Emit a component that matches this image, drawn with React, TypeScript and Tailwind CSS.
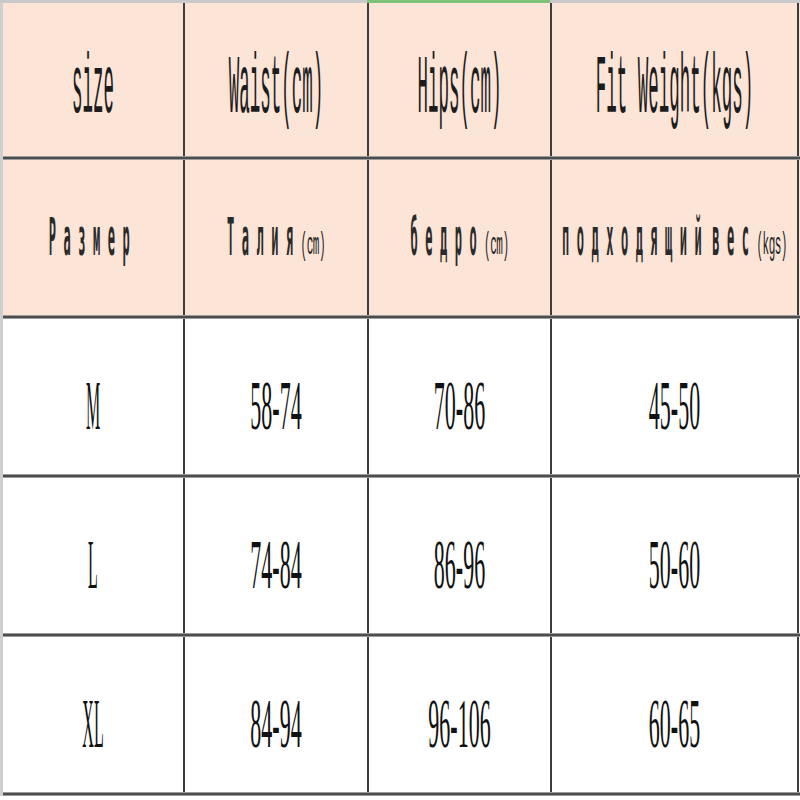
import React from "react";

const widths = ["w-[182px]", "w-[184px]", "w-[183px]", "w-[247px]"];

const rows = [
  { size: "M", waist: "58-74", hips: "70-86", weight: "45-50" },
  { size: "L", waist: "74-84", hips: "86-96", weight: "50-60" },
  { size: "XL", waist: "84-94", hips: "96-106", weight: "60-65" },
];

const Line = () => (
  <div className="h-[4px] w-full bg-[#4d4d4d] border-y border-[#9c9c9c]" />
);

const EnHead = ({ text }: { text: string }) => (
  <span className="inline-block font-['Liberation_Mono',monospace] text-[17.5px] leading-none text-[#1c1c1c] scale-y-[4.8] whitespace-pre">
    {text}
  </span>
);

const Ru = ({ text }: { text: string }) => (
  <span className="inline-block font-['DejaVu_Sans_Mono',monospace] font-bold text-[12px] leading-none tracking-[7.5px] text-[#2a2a2a] scale-y-[4.3] whitespace-pre">
    {text}
  </span>
);

const Unit = ({ text }: { text: string }) => (
  <span className="inline-block mt-[18px] font-['Liberation_Mono',monospace] text-[11px] leading-none text-[#222] scale-y-[2.9] tracking-[-0.5px]">
    {text}
  </span>
);

const Num = ({ text }: { text: string }) => (
  <span className="inline-block font-['Liberation_Serif',serif] text-[22px] leading-none text-[#111] scale-y-[3.2]">
    {text}
  </span>
);

const App = () => {
  return (
    <div className="w-[800px] h-[800px] bg-white flex flex-col">
      <div className="h-[3px] flex">
        <div className="w-[367px] bg-[#c9c9c9]" />
        <div className="w-[183px] bg-[#7fc27a]" />
        <div className="flex-1 bg-[#c9c9c9]" />
      </div>
      <div className="flex flex-col border-l-[3px] border-[#cfcfcf]">
        <div className="flex h-[153px] bg-[#fce4d6]">
          {["size", "Waist(cm)", "Hips(cm)", "Fit Weight(kgs)"].map((t, i) => (
            <div
              key={t}
              className={`${widths[i]} border-r-2 border-[#3c3c3c] flex items-center justify-center pt-[24px]`}
            >
              <EnHead text={t} />
            </div>
          ))}
        </div>
        <Line />
        <div className="flex h-[155px] bg-[#fce4d6]">
          <div className={`${widths[0]} border-r-2 border-[#3c3c3c] flex items-center justify-center`}>
            <Ru text="Размер" />
          </div>
          <div className={`${widths[1]} border-r-2 border-[#3c3c3c] flex items-center justify-center`}>
            <Ru text="Талия" />
            <Unit text="(cm)" />
          </div>
          <div className={`${widths[2]} border-r-2 border-[#3c3c3c] flex items-center justify-center`}>
            <Ru text="бедро" />
            <Unit text="(cm)" />
          </div>
          <div className={`${widths[3]} border-r-2 border-[#3c3c3c] flex items-center justify-center`}>
            <Ru text="подходящий" />
            <span className="ml-[3px]" />
            <Ru text="вес" />
            <Unit text="(kgs)" />
          </div>
        </div>
        <Line />
        {rows.map((r) => (
          <React.Fragment key={r.size}>
            <div className="flex h-[155px]">
              <div className={`${widths[0]} border-r-2 border-[#3c3c3c] flex items-center justify-center pt-[20px]`}>
                <span className="inline-block font-['Liberation_Serif',serif] text-[16px] leading-none text-[#111] scale-y-[4.4]">
                  {r.size}
                </span>
              </div>
              <div className={`${widths[1]} border-r-2 border-[#3c3c3c] flex items-center justify-center pt-[20px]`}>
                <Num text={r.waist} />
              </div>
              <div className={`${widths[2]} border-r-2 border-[#3c3c3c] flex items-center justify-center pt-[20px]`}>
                <Num text={r.hips} />
              </div>
              <div className={`${widths[3]} border-r-2 border-[#3c3c3c] flex items-center justify-center pt-[20px]`}>
                <Num text={r.weight} />
              </div>
            </div>
            <Line />
          </React.Fragment>
        ))}
      </div>
    </div>
  );
};

export default App;
